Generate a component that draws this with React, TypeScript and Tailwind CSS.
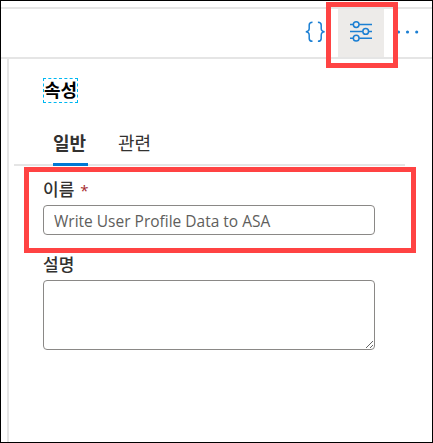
import React from "react";

const BracesIcon = () => (
  <svg width="20" height="22" viewBox="0 0 20 22" fill="none" stroke="#1b7fd3" strokeWidth="1.5">
    <path d="M7.5 1.200C5 1.200 4.200 2.100 4.200 4v3.500c0 2-.9 3.100-3.400 3.300 2.500.2 3.400 1.400 3.400 3.400v3.200c0 2 .8 2.900 3.300 2.900" />
    <path d="M12.900 1.200c2.500 0 3.300.9 3.300 2.800v3.500c0 2 .9 3.100 3.400 3.300-2.500.2-3.400 1.400-3.400 3.400v3.200c0 2-.8 2.900-3.300 2.900" />
  </svg>
);

const SlidersIcon = () => (
  <svg width="22" height="22" viewBox="0 0 22 22" fill="none" stroke="#1b7fd3" strokeWidth="1.5">
    <path d="M0 4.500H3.200M9.200 4.500H22M0 11.500H12.700M18.700 11.500H22M0 18.200H3.200M9.200 18.200H22" />
    <circle cx="6.200" cy="4.600" r="2.850" />
    <circle cx="15.700" cy="11.400" r="2.850" />
    <circle cx="6.200" cy="18.200" r="2.850" />
  </svg>
);

const DotsIcon = () => (
  <svg width="24" height="4" viewBox="0 0 24 4" fill="#1b7fd3">
    <circle cx="2.500" cy="2" r="1.550" />
    <circle cx="11.500" cy="2" r="1.550" />
    <circle cx="20.700" cy="2" r="1.550" />
  </svg>
);

export default function App() {
  return (
    <div className="relative flex h-[443px] w-[433px] flex-col overflow-hidden border border-black bg-white pt-1.5 font-['Noto_Sans_CJK_KR',sans-serif] text-[#323130]">
      <header className="flex h-[52px] shrink-0 border-y-2 border-[#e5e5e5] pl-[304px]">
        <div className="flex w-[33px] pt-3">
          <BracesIcon />
        </div>
        <div className="flex w-[46px] bg-[#edebe9] pl-3 pt-[11px]">
          <SlidersIcon />
        </div>
        <div className="flex pl-3 pt-[21px]">
          <DotsIcon />
        </div>
      </header>

      <main className="ml-1.5 flex min-h-0 grow flex-col border-l-2 border-[#e5e5e5] pl-[5px]">
        <h1 className="ml-[29px] mt-[19px] flex h-[25px] w-[35px] items-center justify-center whitespace-nowrap border border-dashed border-[#00b7f1] pb-[3px] text-[18px] font-bold leading-none text-black">
          속성
        </h1>
        <nav className="mt-[25px] flex h-[38px] w-[391px] shrink-0 border-b-2 border-[#e5e5e5] pl-[39px] text-[18px] leading-[29px]">
          <span className="flex h-[38px] w-[35px] whitespace-nowrap border-b-[3px] border-[#0078d4] font-bold">일반</span>
          <span className="ml-[30px] font-normal">관련</span>
        </nav>
        <form className="ml-[29px] flex w-[332px] flex-col">
          <label className="mt-[12px] flex h-[27px] gap-1.5 text-[17px] font-medium leading-[22px]">
            이름
            <span className="font-['Open_Sans',sans-serif] text-[15px] font-normal leading-[24px] text-[#a4262c]">*</span>
          </label>
          <input
            readOnly
            value="Write User Profile Data to ASA"
            className="h-[30px] rounded-sm border border-[#8a8886] px-[10px] pt-0.5 font-['Open_Sans',sans-serif] text-[15.5px] text-[#605e5c] outline-none"
          />
          <label className="mt-[18px] h-[27px] text-[17px] font-medium leading-[22px]">설명</label>
          <textarea className="h-[70px] resize rounded-sm border border-[#8a8886] outline-none" />
        </form>
      </main>

      <div className="pointer-events-none absolute left-[325px] top-px h-[66px] w-[72px] border-[5px] border-[#ff4343]" />
      <div className="pointer-events-none absolute left-[23px] top-[166px] h-[86px] w-[392px] border-[5px] border-[#ff4343]" />
    </div>
  );
}
